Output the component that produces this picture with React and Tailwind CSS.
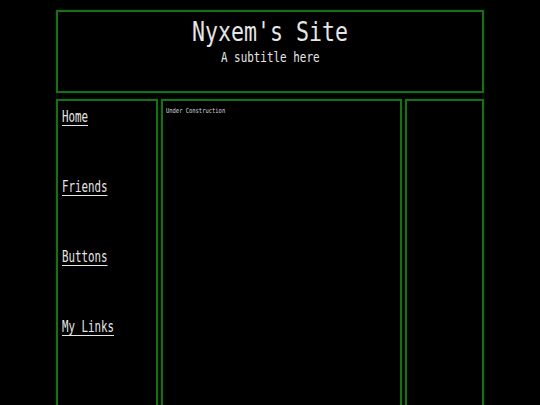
import React from 'react';

const mono = { fontFamily: '"DejaVu Sans Mono", "Liberation Mono", monospace' };

function Box({ className = '', children }) {
  return (
    <div className={`border-2 border-[#1a6e1a] shadow-[0_0_2px_#0c3d0c] ${className}`}>{children}</div>
  );
}

export default function App() {
  const links = ['Home', 'Friends', 'Buttons', 'My Links'];
  return (
    <div className="min-h-[405px] h-[405px] overflow-hidden bg-black text-[#e6e6e6]" style={mono}>
      <div className="mx-auto w-[428px] pt-[10px]">
        <Box className="h-[83px] flex flex-col items-center">
          <h1 className="mt-[4px] text-[26px] leading-[32px] scale-x-[0.83]">Nyxem's Site</h1>
          <p className="mt-[1px] text-[14px] leading-[16px] scale-x-[0.78]">A subtitle here</p>
        </Box>
        <div className="mt-[6px] flex gap-[3px]">
          <Box className="w-[102px] h-[320px] shrink-0 px-[4px] pt-[6px]">
            <ul className="flex flex-col gap-[50px]">
              {links.map((l) => (
                <li key={l} className="h-[20px]">
                  <a
                    href="#"
                    className="block origin-left text-[15px] leading-[20px] underline underline-offset-[3px] scale-x-[0.72] text-[#e6e6e6]"
                  >
                    {l}
                  </a>
                </li>
              ))}
            </ul>
          </Box>
          <Box className="w-[241px] h-[320px] shrink-0 px-[3px] pt-[5px]">
            <p className="origin-left text-[7px] leading-[10px] scale-x-[0.78] text-[#d8d8d8]">Under Construction</p>
          </Box>
          <Box className="flex-1 h-[320px]" />
        </div>
      </div>
    </div>
  );
}
